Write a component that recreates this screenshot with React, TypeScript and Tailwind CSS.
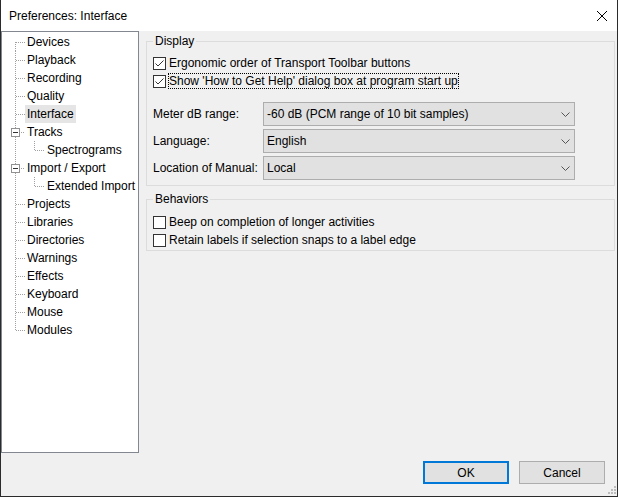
import React from "react";

const FONT = { fontFamily: '"Liberation Sans", Arial, sans-serif' };

type TreeItem = {
  label: string;
  level: 0 | 1;
  kind?: "first" | "last" | "expander" | "mid";
  selected?: boolean;
};

const items: TreeItem[] = [
  { label: "Devices", level: 0, kind: "first" },
  { label: "Playback", level: 0 },
  { label: "Recording", level: 0 },
  { label: "Quality", level: 0 },
  { label: "Interface", level: 0, selected: true },
  { label: "Tracks", level: 0, kind: "expander" },
  { label: "Spectrograms", level: 1 },
  { label: "Import / Export", level: 0, kind: "expander" },
  { label: "Extended Import", level: 1 },
  { label: "Projects", level: 0 },
  { label: "Libraries", level: 0 },
  { label: "Directories", level: 0 },
  { label: "Warnings", level: 0 },
  { label: "Effects", level: 0 },
  { label: "Keyboard", level: 0 },
  { label: "Mouse", level: 0 },
  { label: "Modules", level: 0, kind: "last" },
];

const DOT = "#a0a0a0";

function Connector({ item }: { item: TreeItem }) {
  if (item.level === 1) {
    return (
      <svg width="43" height="18" className="shrink-0" shapeRendering="crispEdges">
        <line x1="13.5" y1="0" x2="13.5" y2="18" stroke={DOT} strokeDasharray="1 1" />
        <line x1="32.5" y1="0" x2="32.5" y2="10" stroke={DOT} strokeDasharray="1 1" />
        <line x1="33" y1="9.5" x2="43" y2="9.5" stroke={DOT} strokeDasharray="1 1" />
      </svg>
    );
  }
  const kind = item.kind ?? "mid";
  return (
    <svg width="23" height="18" className="shrink-0" shapeRendering="crispEdges">
      {kind === "first" && (
        <line x1="13.5" y1="9" x2="13.5" y2="18" stroke={DOT} strokeDasharray="1 1" />
      )}
      {kind === "mid" && (
        <line x1="13.5" y1="0" x2="13.5" y2="18" stroke={DOT} strokeDasharray="1 1" />
      )}
      {kind === "last" && (
        <line x1="13.5" y1="0" x2="13.5" y2="10" stroke={DOT} strokeDasharray="1 1" />
      )}
      {kind === "expander" ? (
        <>
          <line x1="13.5" y1="0" x2="13.5" y2="5" stroke={DOT} strokeDasharray="1 1" />
          <line x1="13.5" y1="14" x2="13.5" y2="18" stroke={DOT} strokeDasharray="1 1" />
          <rect x="9.5" y="5.5" width="8" height="8" fill="#fff" stroke="#919191" />
          <line x1="11" y1="9.5" x2="16" y2="9.5" stroke="#333" />
          <line x1="19" y1="9.5" x2="23" y2="9.5" stroke={DOT} strokeDasharray="1 1" />
        </>
      ) : (
        <line x1="14" y1="9.5" x2="23" y2="9.5" stroke={DOT} strokeDasharray="1 1" />
      )}
    </svg>
  );
}

function Checkbox({ checked }: { checked: boolean }) {
  return (
    <svg width="13" height="13" className="shrink-0" shapeRendering="crispEdges">
      <rect x="0.5" y="0.5" width="12" height="12" fill="#fff" stroke="#333" />
      {checked && (
        <polyline
          points="2.5,6.5 5,9 10.5,3.5"
          fill="none"
          stroke="#333"
          strokeWidth="1"
          shapeRendering="geometricPrecision"
        />
      )}
    </svg>
  );
}

function CheckRow({
  checked,
  label,
  focused,
}: {
  checked: boolean;
  label: string;
  focused?: boolean;
}) {
  return (
    <div className="flex h-[18px] items-center">
      <Checkbox checked={checked} />
      <span
        className={
          focused
            ? "ml-[2px] border border-dotted border-black leading-[14px]"
            : "ml-[3px] leading-[14px]"
        }
      >
        {label}
      </span>
    </div>
  );
}

function Dropdown({ label, value }: { label: string; value: string }) {
  return (
    <div className="flex h-[24px] items-center">
      <span className="w-[110px] shrink-0">{label}</span>
      <div className="flex h-full w-[312px] items-center border border-[#adadad] bg-[#e1e1e1] pl-[3px]">
        <span className="flex-1">{value}</span>
        <svg width="9" height="5" className="mr-[4px]">
          <polyline points="0.5,0.5 4.5,4.5 8.5,0.5" fill="none" stroke="#555" strokeWidth="1" />
        </svg>
      </div>
    </div>
  );
}

export default function App() {
  return (
    <div
      className="flex h-[497px] w-[618px] flex-col border-x border-b border-[#2b2b2b] bg-[#f0f0f0] text-[12px] text-black"
      style={FONT}
    >
      {/* Title bar */}
      <div className="flex h-[31px] shrink-0 items-center bg-white pl-[8px]">
        <span>Preferences: Interface</span>
        <svg width="10" height="10" className="ml-auto mr-[10px]">
          <line x1="0" y1="0" x2="10" y2="10" stroke="#000" strokeWidth="1" />
          <line x1="10" y1="0" x2="0" y2="10" stroke="#000" strokeWidth="1" />
        </svg>
      </div>

      {/* Main */}
      <div className="flex h-[422px] shrink-0">
        {/* Tree */}
        <div className="flex h-full w-[138px] shrink-0 flex-col border border-[#828790] bg-white pt-[1px]">
          {items.map((it) => (
            <div key={it.label} className="flex h-[18px] items-stretch">
              <Connector item={it} />
              <span
                className={
                  "flex items-center px-[2px] whitespace-nowrap " +
                  (it.selected ? "bg-[#e5e5e5]" : "")
                }
              >
                {it.label}
              </span>
            </div>
          ))}
        </div>

        {/* Right pane */}
        <div className="flex flex-1 flex-col pl-[7px] pr-[2px]">
          <fieldset className="mt-[2px] border border-[#dcdcdc] px-[6px] pb-[5px] pt-[5px]">
            <legend className="px-[2px] leading-[16px]">Display</legend>
            <CheckRow checked label="Ergonomic order of Transport Toolbar buttons" />
            <CheckRow checked focused label="Show 'How to Get Help' dialog box at program start up" />
            <div className="mt-[12px] flex flex-col gap-[3px]">
              <Dropdown label="Meter dB range:" value="-60 dB (PCM range of 10 bit samples)" />
              <Dropdown label="Language:" value="English" />
              <Dropdown label="Location of Manual:" value="Local" />
            </div>
          </fieldset>

          <fieldset className="mt-[5px] border border-[#dcdcdc] px-[6px] pb-[1px] pt-[6px]">
            <legend className="px-[2px] leading-[16px]">Behaviors</legend>
            <CheckRow checked={false} label="Beep on completion of longer activities" />
            <CheckRow checked={false} label="Retain labels if selection snaps to a label edge" />
          </fieldset>
        </div>
      </div>

      {/* Buttons */}
      <div className="relative flex flex-1 items-start justify-end gap-[10px] pr-[12px] pt-[8px]">
        <button className="flex h-[23px] w-[86px] items-center justify-center border-2 border-[#0078d7] bg-[#e1e1e1]">
          OK
        </button>
        <button className="flex h-[23px] w-[86px] items-center justify-center border border-[#adadad] bg-[#e1e1e1]">
          Cancel
        </button>
        <svg width="8" height="8" className="absolute bottom-[2px] right-[1px]">
          <rect x="6" y="0" width="2" height="2" fill="#bcbcbc" />
          <rect x="3" y="3" width="2" height="2" fill="#bcbcbc" />
          <rect x="6" y="3" width="2" height="2" fill="#bcbcbc" />
          <rect x="0" y="6" width="2" height="2" fill="#bcbcbc" />
          <rect x="3" y="6" width="2" height="2" fill="#bcbcbc" />
          <rect x="6" y="6" width="2" height="2" fill="#bcbcbc" />
        </svg>
      </div>
    </div>
  );
}
